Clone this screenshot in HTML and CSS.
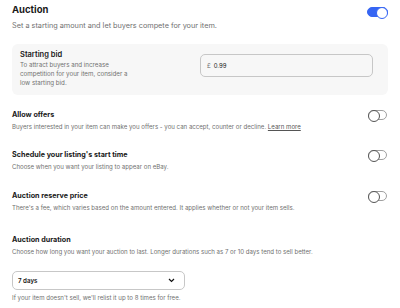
FILE: index.html
```html
<!DOCTYPE html>
<html lang="en">
<head>
    <meta charset="UTF-8">
    <meta name="viewport" content="width=device-width, initial-scale=1.0">
    <title>Auction</title>
    <link rel="stylesheet" href="styles.css">
</head>
<body>
    <div class="container">
        <div class="row head-row">
            <div class="row-text">
                <h2>Auction</h2>
                <p class="sub">Set a starting amount and let buyers compete for your item.</p>
            </div>
            <span class="switch on"></span>
        </div>

        <div class="bid-box">
            <div class="bid-text">
                <h3>Starting bid</h3>
                <p class="hint">To attract buyers and increase competition for your item, consider a low starting bid.</p>
            </div>
            <div class="price-input">
                <span class="currency">£</span>
                <span class="amount">0.99</span>
            </div>
        </div>

        <div class="row option">
            <div class="row-text">
                <h3>Allow offers</h3>
                <p class="hint">Buyers interested in your item can make you offers - you can accept, counter or decline. <a href="#">Learn more</a></p>
            </div>
            <span class="switch"></span>
        </div>

        <div class="row option">
            <div class="row-text">
                <h3>Schedule your listing's start time</h3>
                <p class="hint">Choose when you want your listing to appear on eBay.</p>
            </div>
            <span class="switch"></span>
        </div>

        <div class="row option">
            <div class="row-text">
                <h3>Auction reserve price</h3>
                <p class="hint">There's a fee, which varies based on the amount entered. It applies whether or not your item sells.</p>
            </div>
            <span class="switch"></span>
        </div>

        <div class="duration">
            <h3>Auction duration</h3>
            <p class="hint">Choose how long you want your auction to last. Longer durations such as 7 or 10 days tend to sell better.</p>
            <div class="select">
                <span>7 days</span>
                <svg width="7" height="5" viewBox="0 0 7 5"><path d="M1 1l2.5 2.5L6 1" fill="none" stroke="#111" stroke-width="1.2"/></svg>
            </div>
            <p class="hint note">If your item doesn't sell, we'll relist it up to 8 times for free.</p>
        </div>
    </div>
</body>
</html>
```

FILE: styles.css
```css
* {
    box-sizing: border-box;
}
body {
    margin: 0;
    background: white;
    font-family: 'Inter', 'Noto Sans', sans-serif;
    color: #191919;
}
.container {
    padding: 4px 12px 0 12px;
}
h2 {
    margin: 0;
    font-size: 9.5px;
    font-weight: 700;
    line-height: 12px;
}
h3 {
    margin: 0;
    font-size: 7.2px;
    font-weight: 700;
    line-height: 10px;
}
p {
    margin: 0;
}
.sub {
    margin-top: 5px;
    font-size: 7.3px;
    color: #707070;
    line-height: 10px;
}
.hint {
    font-size: 6.1px;
    color: #707070;
    line-height: 10px;
}
.hint a {
    color: #555;
}
.row {
    display: flex;
    justify-content: space-between;
    align-items: flex-start;
}
.switch {
    flex: none;
    width: 19px;
    height: 10px;
    margin-right: 1px;
    border: 1px solid #a0a0a0;
    border-radius: 5px;
    position: relative;
    background: white;
}
.switch::after {
    content: '';
    position: absolute;
    left: -1px;
    top: -1px;
    width: 10px;
    height: 10px;
    border-radius: 50%;
    border: 1px solid #555;
    background: white;
}
.head-row .switch {
    margin-top: 3px;
    width: 21px;
    height: 10px;
    margin-right: 0;
}
.switch.on {
    background: #3665f3;
    border-color: #3665f3;
}
.switch.on::after {
    left: auto;
    right: -1px;
    border-color: #3665f3;
}
.bid-box {
    margin-top: 13px;
    height: 51px;
    background: #f7f7f7;
    border-radius: 6px;
    padding: 6px 15px 0 8px;
    display: flex;
    justify-content: space-between;
}
.bid-text {
    width: 115px;
}
.bid-text h3 {
    font-weight: 600;
    font-size: 7.5px;
}
.bid-text .hint {
    font-size: 6.2px;
    line-height: 9px;
}
.price-input {
    margin-top: 4px;
    width: 173px;
    height: 23px;
    background: #f7f7f7;
    border: 1px solid #c7c7c7;
    border-radius: 5px;
    display: flex;
    align-items: center;
    gap: 3px;
    padding-left: 6px;
    font-size: 6px;
}
.currency {
    color: #707070;
}
.option {
    margin-top: 15px;
}
.option h3 {
    margin-bottom: 2px;
}
.option + .option {
    margin-top: 18px;
}
.option + .option + .option {
    margin-top: 19px;
}
.duration {
    margin-top: 22px;
}
.duration h3 {
    margin-bottom: 2px;
}
.select {
    margin-top: 14px;
    width: 173px;
    height: 19px;
    border: 1px solid #c7c7c7;
    border-radius: 5px;
    display: flex;
    align-items: center;
    justify-content: space-between;
    padding: 0 9px 0 5px;
    font-size: 6.2px;
    font-weight: 600;
}
.note {
    margin-top: 3px;
}
```
